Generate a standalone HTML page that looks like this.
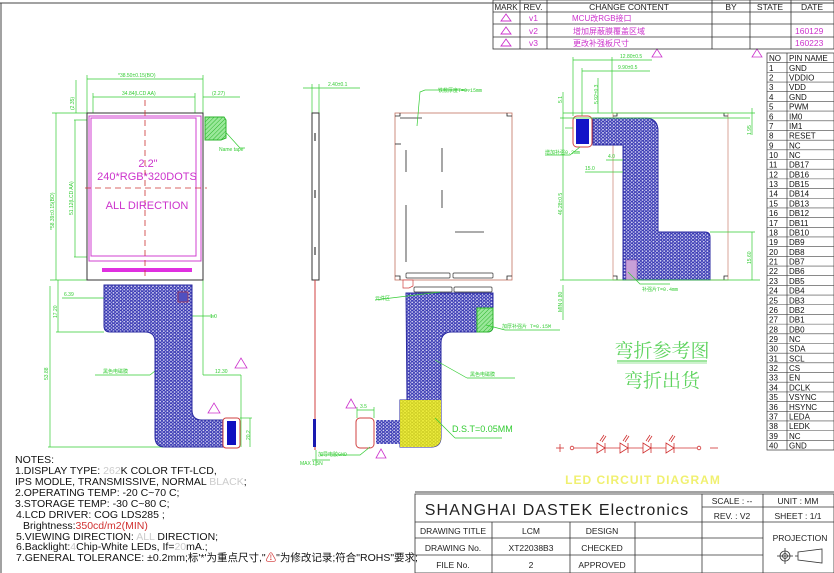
<!DOCTYPE html>
<html><head><meta charset="utf-8"><style>
html,body{margin:0;padding:0;background:#fff;width:834px;height:573px;overflow:hidden}
svg{display:block}
text{font-family:"Liberation Sans","Noto Sans CJK SC",sans-serif}
.m{font-family:"Liberation Mono","Noto Sans CJK SC",monospace}
</style></head><body>
<svg width="834" height="573" viewBox="0 0 834 573" xmlns="http://www.w3.org/2000/svg">
<defs>
<pattern id="hex" width="3.6" height="3.2" patternUnits="userSpaceOnUse">
<rect width="3.6" height="3.2" fill="#d8d8f4"/>
<circle cx="1.8" cy="1.6" r="1.35" fill="none" stroke="#3030b0" stroke-width="0.9"/>
</pattern>
<pattern id="hexy" width="3.6" height="3.2" patternUnits="userSpaceOnUse">
<rect width="3.6" height="3.2" fill="#f0f040"/>
<circle cx="1.8" cy="1.6" r="1.35" fill="none" stroke="#c8c820" stroke-width="0.7"/>
</pattern>
<pattern id="hatch" width="3" height="3" patternUnits="userSpaceOnUse" patternTransform="rotate(45)">
<rect width="3" height="3" fill="#9be89b"/><line x1="0" y1="0" x2="0" y2="3" stroke="#2db52d" stroke-width="1"/>
</pattern>
</defs>
<line x1="0" y1="3" x2="834" y2="3" stroke="#444" stroke-width="1"/>
<line x1="1" y1="3" x2="1" y2="573" stroke="#444"/>
<line x1="415" y1="492" x2="834" y2="492" stroke="#444"/>

<!-- LEFT FRONT VIEW -->
<g stroke="#33cc33" stroke-width="0.7" fill="none">
<line x1="87" y1="79" x2="203" y2="79"/><line x1="87" y1="75" x2="87" y2="113"/><line x1="203" y1="75" x2="203" y2="113"/>
<line x1="93" y1="97" x2="195" y2="97"/><line x1="93" y1="93" x2="93" y2="117"/><line x1="195" y1="93" x2="195" y2="117"/>
<line x1="203" y1="97" x2="240" y2="97"/>
<line x1="52" y1="113" x2="87" y2="113"/><line x1="56" y1="113" x2="56" y2="280"/>
<line x1="74" y1="120" x2="90" y2="120"/><line x1="75" y1="120" x2="75" y2="257"/><line x1="74" y1="257" x2="90" y2="257"/>
<line x1="76" y1="80" x2="76" y2="113"/>
<line x1="50" y1="280" x2="104" y2="280"/><line x1="58" y1="280" x2="58" y2="332"/><line x1="56" y1="332" x2="104" y2="332"/>
<line x1="50" y1="286" x2="50" y2="447"/><line x1="48" y1="447" x2="240" y2="447"/>
<line x1="62" y1="298" x2="104" y2="298"/>
<line x1="188" y1="316" x2="215" y2="316"/><line x1="203" y1="280" x2="203" y2="375"/>
<line x1="203" y1="375" x2="241" y2="375"/><line x1="241" y1="375" x2="241" y2="447"/>
<line x1="240" y1="418" x2="252" y2="418"/><line x1="250" y1="418" x2="250" y2="447"/>
<line x1="95" y1="375" x2="150" y2="375"/><line x1="150" y1="375" x2="165" y2="363"/>
<path d="M211 127 H221 L240 148 H245"/>
</g>
<g fill="#33cc33" font-size="5">
<text x="118" y="77">*38.50±0.15(BO)</text>
<text x="122" y="95">34.84(LCD AA)</text>
<text x="212" y="95">(2.27)</text>
<text x="219" y="151">Name tape</text>
<text x="64" y="296">6.39</text>
<text x="210" y="318">1.0</text>
<text x="215" y="373">12.30</text>
<text x="103" y="373" class="m">黑色电磁膜</text>
</g>
<g fill="#33cc33" font-size="5">
<text transform="translate(54,230) rotate(-90)">*58.39±0.15(BO)</text>
<text transform="translate(73,215) rotate(-90)">51.12(LCD AA)</text>
<text transform="translate(74,110) rotate(-90)">(2.35)</text>
<text transform="translate(57,318) rotate(-90)">17.20</text>
<text transform="translate(48,380) rotate(-90)">53.88</text>
<text transform="translate(250,440) rotate(-90)">20.2</text>
</g>
<rect x="87" y="113" width="116" height="167" fill="#fff" stroke="#333" stroke-width="1"/>
<rect x="89" y="116" width="112" height="145" fill="none" stroke="#d040d0" stroke-width="1"/>
<rect x="91" y="118" width="105" height="138" fill="none" stroke="#d040d0" stroke-width="1"/>
<rect x="102" y="268" width="90" height="4" fill="#e030e0"/>
<path d="M205 117 H224 L226 120 V138 L221 140 H205 Z" fill="url(#hatch)" stroke="#2db52d"/>
<line x1="145" y1="100" x2="145" y2="280" stroke="#cc3333" stroke-dasharray="6,4" stroke-width="0.8"/>
<line x1="85" y1="188" x2="207" y2="188" stroke="#cc3333" stroke-dasharray="6,4" stroke-width="0.8"/>
<g fill="#cc33cc" font-size="11" text-anchor="middle">
<text x="148" y="167">2.2"</text>
<text x="147" y="180">240*RGB*320DOTS</text>
<text x="147" y="209">ALL DIRECTION</text>
</g>
<path d="M104 285 H192 V410 Q192 420 202 420 H223 V447 H165 Q155 447 155 437 V342 Q155 332 145 332 H110 Q104 332 104 326 Z" fill="url(#hex)" stroke="#2a2aa0" stroke-width="1"/>
<rect x="178" y="292" width="10" height="10" fill="#5050c0" stroke="#c03030" stroke-width="0.6"/>
<rect x="223" y="418" width="17" height="30" rx="3" fill="#fff" stroke="#d04040"/>
<rect x="227" y="421" width="9" height="24" fill="#1010c0"/>
<path d="M208 413 L214 403 L220 413 Z" fill="none" stroke="#cc33cc" stroke-width="0.8"/>
<path d="M235 368 L241 358 L247 368 Z" fill="none" stroke="#cc33cc" stroke-width="0.8"/>

<!-- SIDE VIEW -->
<g stroke="#33cc33" stroke-width="0.7" fill="none">
<line x1="303" y1="88" x2="360" y2="88"/><line x1="312" y1="84" x2="312" y2="113"/><line x1="319" y1="84" x2="319" y2="113"/>
<line x1="312" y1="460" x2="330" y2="460"/><line x1="316" y1="450" x2="316" y2="466"/>
</g>
<text x="328" y="86" font-size="5" fill="#33cc33">2.40±0.1</text>
<text x="300" y="465" font-size="5" fill="#33cc33">MAX 1.5N</text>
<rect x="312" y="113" width="7" height="167" fill="#fff" stroke="#333"/>
<g fill="#888"><rect x="314" y="133" width="2" height="8"/><rect x="314" y="190" width="2" height="8"/><rect x="314" y="247" width="2" height="8"/></g>
<line x1="315" y1="280" x2="315" y2="450" stroke="#d04040"/>
<rect x="313" y="419" width="3" height="28" fill="#1a1ab0"/>

<!-- BACK VIEW -->
<rect x="395" y="113" width="117" height="167" fill="#fff" stroke="#c07060" stroke-width="0.8"/>
<g stroke="#222" stroke-width="0.8" fill="none">
<path d="M395 116 H400 V113 M507 113 V116 H512 M395 276 H400 V280 M507 280 V276 H512"/>
<line x1="406" y1="150" x2="406" y2="172"/><line x1="442" y1="148" x2="442" y2="172"/>
<line x1="442" y1="190" x2="442" y2="208"/><line x1="406" y1="205" x2="406" y2="262"/>
<line x1="455" y1="232" x2="484" y2="232"/><line x1="395" y1="144" x2="401" y2="144"/>
<line x1="400" y1="118" x2="422" y2="118"/>
</g>
<g fill="#fff" stroke="#333" stroke-width="0.7">
<rect x="406" y="273" width="44" height="5" rx="1"/><rect x="453" y="273" width="40" height="5" rx="1"/>
<rect x="414" y="287" width="38" height="5" rx="1"/><rect x="454" y="287" width="38" height="5" rx="1"/>
</g>
<path d="M406 293 H493 V326 Q493 332 487 332 H452 Q441 332 441 343 V437 Q441 447 431 447 H400 V400 H407 Z" fill="url(#hex)" stroke="#2a2aa0" stroke-width="1"/>
<path d="M400 400 H441 V437 Q441 447 431 447 H400 Z" fill="url(#hexy)"/>
<path d="M477 308 H493 V326 Q493 332 487 332 H477 Z" fill="url(#hatch)" stroke="#2db52d"/>
<rect x="376" y="420" width="24" height="24" fill="url(#hex)"/>
<rect x="356" y="418" width="18" height="30" rx="4" fill="#fff" stroke="#d04040"/>
<path d="M403 280 H413 V286 L409 288 H403 Z" fill="#fff" stroke="#d04040" stroke-width="0.7"/>
<g stroke="#33cc33" stroke-width="0.7" fill="none">
<path d="M425 90 L420 92 L417 126"/><line x1="425" y1="90" x2="470" y2="90"/>
<line x1="375" y1="300" x2="440" y2="292"/><line x1="486" y1="325" x2="505" y2="330"/><line x1="505" y1="330" x2="560" y2="330"/>
<line x1="435" y1="360" x2="467" y2="378"/><line x1="467" y1="378" x2="515" y2="378"/>
<line x1="435" y1="418" x2="455" y2="438"/><line x1="455" y1="438" x2="502" y2="438"/>
<line x1="357" y1="410" x2="374" y2="410"/><line x1="357" y1="407" x2="357" y2="418"/><line x1="374" y1="407" x2="374" y2="418"/>
<path d="M370 447 L360 455 H320"/>
</g>
<g fill="#33cc33" font-size="5">
<text x="438" y="92" class="m">铁敷厚度T=0.15mm</text>
<text x="375" y="300" class="m">元件区</text>
<text x="502" y="328" class="m">加厚补强片 T=0.15M</text>
<text x="470" y="376" class="m">黑色电磁膜</text>
<text x="360" y="408">3.5</text>
<text x="318" y="456" class="m">加导电胶GND</text>
</g>
<text x="452" y="432" font-size="9" fill="#33cc33">D.S.T=0.05MM</text>
<path d="M346 408 L351 399 L356 408 Z" fill="none" stroke="#cc33cc" stroke-width="0.8"/>
<path d="M376 458 L381 449 L386 458 Z" fill="none" stroke="#cc33cc" stroke-width="0.8"/>

<!-- RIGHT BENT VIEW -->
<rect x="613" y="113" width="115" height="167" fill="#fff" stroke="#d09080" stroke-width="0.8"/>
<g stroke="#222" stroke-width="0.8" fill="none">
<path d="M613 116 H617 V113 M724 113 V116 H728 M613 276 H617 V280 M724 280 V276 H728"/>
</g>
<path d="M593 118 H645 Q658 118 658 131 V232 H705 Q710 232 710 237 V280 H623 V145 H593 Z" fill="url(#hex)" stroke="#2a2aa0" stroke-width="1"/>
<rect x="626" y="260" width="11" height="20" fill="#c8a0d8" stroke="#8040a0" stroke-width="0.5"/>
<rect x="573" y="116" width="19" height="31" rx="4" fill="#fff" stroke="#d04040"/>
<rect x="576" y="119" width="13" height="25" fill="#1414c8"/>
<g stroke="#33cc33" stroke-width="0.7" fill="none">
<line x1="573" y1="60" x2="652" y2="60"/><line x1="573" y1="57" x2="573" y2="116"/><line x1="612" y1="57" x2="612" y2="113"/>
<line x1="582" y1="71" x2="650" y2="71"/><line x1="582" y1="68" x2="582" y2="116"/>
<line x1="598" y1="78" x2="598" y2="113"/>
<line x1="563" y1="92" x2="563" y2="280"/><line x1="560" y1="280" x2="760" y2="280"/>
<line x1="563" y1="113" x2="755" y2="113"/><line x1="560" y1="118" x2="750" y2="118"/>
<line x1="752" y1="108" x2="752" y2="135"/><line x1="752" y1="232" x2="752" y2="280"/><line x1="710" y1="232" x2="755" y2="232"/>
<line x1="606" y1="160" x2="623" y2="160"/><line x1="585" y1="172" x2="623" y2="172"/>
<line x1="565" y1="128" x2="573" y2="128"/><path d="M580 147 L570 155 H545"/>
<path d="M628 272 L640 284 H670"/>
<line x1="563" y1="285" x2="563" y2="320"/>
</g>
<g fill="#33cc33" font-size="5">
<text x="620" y="58">12.80±0.5</text>
<text x="618" y="69">9.90±0.5</text>
<text x="608" y="158">4.0</text>
<text x="585" y="170">15.0</text>
<text x="545" y="154" class="m">增加补强0.2mm</text>
<text x="642" y="291" class="m">补强片T=0.4mm</text>
<text transform="translate(598,104) rotate(-90)">5.92±0.3</text>
<text transform="translate(562,103) rotate(-90)">5.1</text>
<text transform="translate(562,215) rotate(-90)">46.28±0.5</text>
<text transform="translate(562,312) rotate(-90)">MIN 0.80</text>
<text transform="translate(751,135) rotate(-90)">1.95</text>
<text transform="translate(751,264) rotate(-90)">15.60</text>
</g>
<path d="M652 57 L657 49 L662 57 Z" fill="none" stroke="#cc33cc" stroke-width="0.8"/>
<path d="M752 57 L757 49 L762 57 Z" fill="none" stroke="#cc33cc" stroke-width="0.8"/>

<g fill="#5ed35e" font-size="19" text-anchor="middle">
<text x="662" y="357" style="font-family:'Noto Serif CJK SC',serif">弯折参考图</text>
<text x="662" y="387" style="font-family:'Noto Serif CJK SC',serif">弯折出货</text>
</g>
<line x1="617" y1="361" x2="707" y2="361" stroke="#3ecc3e" stroke-width="1"/>
<line x1="617" y1="363" x2="707" y2="363" stroke="#3ecc3e" stroke-width="0.6"/>

<!-- LED circuit -->
<g stroke="#d03030" stroke-width="0.8" fill="none">
<line x1="556" y1="448" x2="564" y2="448"/><line x1="560" y1="444" x2="560" y2="452"/>
<circle cx="572" cy="448" r="1.8"/><line x1="574" y1="448" x2="697" y2="448"/><circle cx="699" cy="448" r="1.8"/>
<line x1="710" y1="448" x2="718" y2="448"/>
<g id="led"><path d="M597 443 L605 448 L597 453 Z" fill="#fff"/><line x1="605" y1="443" x2="605" y2="453"/><path d="M600 441 L604 435 M602 442 L606 436"/></g>
<use href="#led" x="23"/><use href="#led" x="46"/><use href="#led" x="69"/>
</g>
<text x="643" y="484" font-size="12" fill="#f0f070" text-anchor="middle" font-family="'Liberation Serif',serif" font-weight="bold" letter-spacing="1">LED CIRCUIT DIAGRAM</text>

<!-- REVISION TABLE -->
<g stroke="#333" stroke-width="0.8" fill="none">
<rect x="493" y="0" width="341" height="49"/>
<line x1="493" y1="12" x2="834" y2="12"/><line x1="493" y1="24" x2="834" y2="24"/><line x1="493" y1="37" x2="834" y2="37"/>
<line x1="520" y1="0" x2="520" y2="49"/><line x1="547" y1="0" x2="547" y2="49"/><line x1="712" y1="0" x2="712" y2="49"/>
<line x1="750" y1="0" x2="750" y2="49"/><line x1="791" y1="0" x2="791" y2="49"/>
</g>
<g font-size="8.5" fill="#222" class="m" text-anchor="middle">
<text x="506" y="10" font-size="8">MARK</text><text x="533" y="10">REV.</text><text x="629" y="10">CHANGE CONTENT</text>
<text x="731" y="10">BY</text><text x="770" y="10">STATE</text><text x="812" y="10">DATE</text>
</g>
<g fill="#cc33cc" font-size="8.5" class="m">
<text x="529" y="21">v1</text><text x="529" y="34">v2</text><text x="529" y="46">v3</text>
<text x="572" y="21" font-size="8">MCU改RGB接口</text><text x="573" y="34" font-size="8">增加屏蔽膜覆盖区域</text><text x="573" y="46" font-size="8">更改补强板尺寸</text>
<text x="795" y="34">160129</text><text x="795" y="46">160223</text>
</g>
<g fill="none" stroke="#cc33cc" stroke-width="0.9">
<path d="M501 21 L506 14 L511 21 Z"/><path d="M501 34 L506 27 L511 34 Z"/><path d="M501 46 L506 39 L511 46 Z"/>
</g>

<!-- PIN TABLE -->
<g stroke="#333" stroke-width="0.7" fill="none">
<rect x="767" y="53" width="67" height="397"/><line x1="787" y1="53" x2="787" y2="450"/>
</g>
<g id="rows" stroke="#444" stroke-width="0.6"></g>
<g font-size="8" fill="#111" id="pins"></g>

<!-- NOTES -->
<g font-size="10.5" fill="#111">
<text x="15" y="463">NOTES:</text>
<text x="15" y="474">1.DISPLAY TYPE: <tspan fill="#ccc">262</tspan>K COLOR TFT-LCD,</text>
<text x="15" y="485">IPS MODLE, TRANSMISSIVE, NORMAL <tspan fill="#ccc">BLACK</tspan>;</text>
<text x="15" y="496">2.OPERATING TEMP: -20 C~70 C;</text>
<text x="15" y="507">3.STORAGE TEMP: -30 C~80 C;</text>
<text x="16" y="518">4.LCD DRIVER: COG   LDS285   ;</text>
<text x="23" y="529">Brightness:<tspan fill="#d03030">350cd/m2(MIN)</tspan></text>
<text x="16" y="540">5.VIEWING DIRECTION: <tspan fill="#ccc">ALL</tspan> DIRECTION;</text>
<text x="16" y="550">6.Backlight:<tspan fill="#ccc">4</tspan>Chip-White LEDs, If=<tspan fill="#ccc">20</tspan>mA.;</text>
<text x="16" y="561">7.GENERAL TOLERANCE: ±0.2mm;标'*'为重点尺寸,"<tspan fill="#d03030">⚠</tspan>"为修改记录;符合"ROHS"要求;</text>
</g>

<!-- TITLE BLOCK -->
<g stroke="#333" stroke-width="0.8" fill="none">
<rect x="415" y="494" width="419" height="79"/>
<line x1="415" y1="522" x2="834" y2="522"/><line x1="702" y1="494" x2="702" y2="573"/><line x1="763" y1="494" x2="763" y2="573"/>
<line x1="702" y1="507" x2="834" y2="507"/>
<line x1="415" y1="538" x2="763" y2="538"/><line x1="415" y1="555" x2="763" y2="555"/>
<line x1="492" y1="522" x2="492" y2="573"/><line x1="570" y1="522" x2="570" y2="573"/><line x1="635" y1="522" x2="635" y2="573"/>
</g>
<text x="557" y="515" font-size="16" fill="#222" text-anchor="middle" letter-spacing="1.1">SHANGHAI DASTEK Electronics</text>
<g font-size="8.5" fill="#222" class="m" text-anchor="middle">
<text x="732" y="504">SCALE : --</text><text x="798" y="504">UNIT : MM</text>
<text x="732" y="519">REV. : V2</text><text x="798" y="519">SHEET : 1/1</text>
<text x="453" y="534">DRAWING TITLE</text><text x="531" y="534">LCM</text><text x="602" y="534">DESIGN</text>
<text x="453" y="551">DRAWING No.</text><text x="531" y="551">XT22038B3</text><text x="602" y="551">CHECKED</text>
<text x="453" y="568">FILE No.</text><text x="531" y="568">2</text><text x="602" y="568">APPROVED</text>
<text x="800" y="541">PROJECTION</text>
</g>
<g stroke="#333" stroke-width="0.8" fill="none">
<circle cx="785" cy="556" r="5"/><circle cx="785" cy="556" r="2.5"/><line x1="777" y1="556" x2="793" y2="556"/><line x1="785" y1="548" x2="785" y2="564"/>
<path d="M798 552 L822 549 V563 L798 560 Z"/><line x1="795" y1="556" x2="798" y2="556"/>
</g>
</svg>
<script>
(function(){
var names=["PIN NAME","GND","VDDIO","VDD","GND","PWM","IM0","IM1","RESET","NC","NC","DB17","DB16","DB15","DB14","DB13","DB12","DB11","DB10","DB9","DB8","DB7","DB6","DB5","DB4","DB3","DB2","DB1","DB0","NC","SDA","SCL","CS","EN","DCLK","VSYNC","HSYNC","LEDA","LEDK","NC","GND"];
var ns="http://www.w3.org/2000/svg";var rows=document.getElementById("rows"),pins=document.getElementById("pins");
var h=397/41;
for(var i=0;i<41;i++){var y=53+h*(i+1);
if(i<40){var l=document.createElementNS(ns,"line");l.setAttribute("x1",767);l.setAttribute("x2",834);l.setAttribute("y1",y);l.setAttribute("y2",y);rows.appendChild(l);}
var t=document.createElementNS(ns,"text");t.setAttribute("x",769);t.setAttribute("y",y-1.5);t.textContent=i==0?"NO":String(i);pins.appendChild(t);
var t2=document.createElementNS(ns,"text");t2.setAttribute("x",789);t2.setAttribute("y",y-1.5);t2.textContent=names[i];pins.appendChild(t2);}
})();
</script>
</body></html>
